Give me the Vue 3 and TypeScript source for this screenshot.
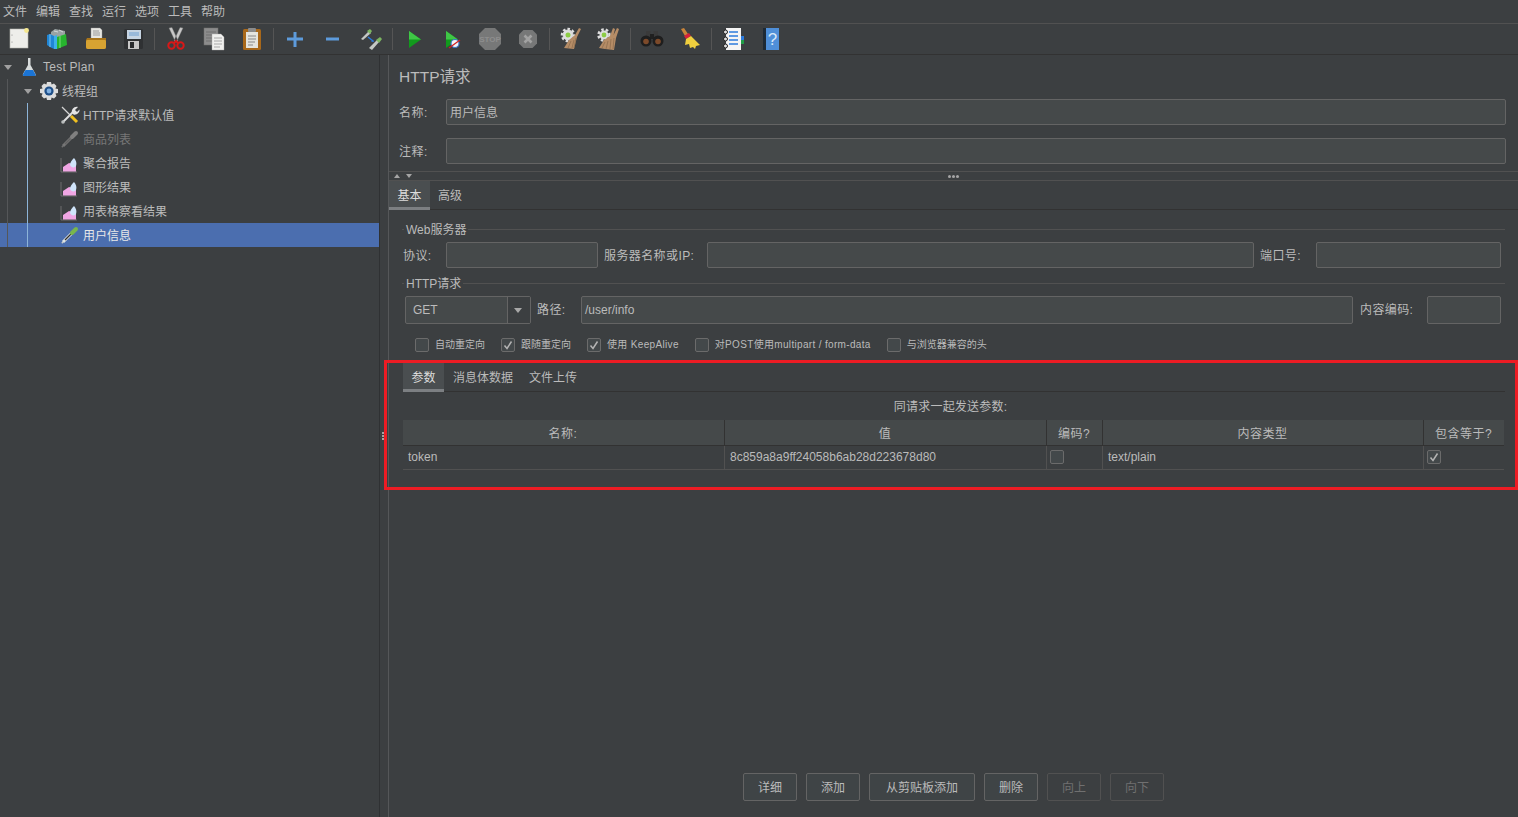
<script setup lang="ts">
const menus = ['文件', '编辑', '查找', '运行', '选项', '工具', '帮助']

// null marks a separator in the toolbar
const tools: (string | null)[] = [
  'new', 'templates', 'open', 'save', null,
  'cut', 'copy', 'paste', null,
  'expand', 'collapse', 'toggle', null,
  'start', 'startNoPause', 'stop', 'shutdown', null,
  'clear', 'clearAll', null,
  'search', 'reset', null,
  'functions', 'help',
]

const treeRows = [
  { label: 'Test Plan', icon: 'flask', indent: 20, arrow: 4 },
  { label: '线程组', icon: 'gear', indent: 39, arrow: 24 },
  { label: 'HTTP请求默认值', icon: 'tools', indent: 60 },
  { label: '商品列表', icon: 'pipette', indent: 60, disabled: true },
  { label: '聚合报告', icon: 'chart', indent: 60 },
  { label: '图形结果', icon: 'chart', indent: 60 },
  { label: '用表格察看结果', icon: 'chart', indent: 60 },
  { label: '用户信息', icon: 'pipette', indent: 60, selected: true },
]

const options = [
  { label: '自动重定向', checked: false },
  { label: '跟随重定向', checked: true },
  { label: '使用 KeepAlive', checked: true, latin: true },
  { label: '对POST使用multipart / form-data', checked: false, latin: true },
  { label: '与浏览器兼容的头', checked: false },
]

const columns = ['名称:', '值', '编码?', '内容类型', '包含等于?']

const buttons = [
  { label: '详细', width: 54 },
  { label: '添加', width: 54 },
  { label: '从剪贴板添加', width: 106 },
  { label: '删除', width: 54 },
  { label: '向上', width: 54, disabled: true },
  { label: '向下', width: 54, disabled: true },
]
</script>

<template>
  <div class="app">
    <div class="menubar">
      <span v-for="m in menus" :key="m" class="menu">{{ m }}</span>
    </div>

    <div class="toolbar">
      <template v-for="(tool, i) in tools" :key="i">
        <span v-if="tool === null" class="sep"></span>
        <span v-else class="tool">
          <svg width="24" height="24" viewBox="0 0 24 24">
            <g v-if="tool === 'new'">
              <rect x="3" y="2" width="18" height="19" fill="#eeeeea" stroke="#b5b5b0" stroke-width=".6" />
              <circle cx="19.500" cy="3.500" r="2.400" fill="#f6e88e" />
              <circle cx="5" cy="8" r=".6" fill="#888" /><circle cx="5" cy="15" r=".6" fill="#888" />
            </g>
            <g v-else-if="tool === 'templates'">
              <path d="M6 5l4-3 5 1 5 1v6H6z" fill="#9aa3a3" />
              <path d="M9 4l4 1M14 3l4 2" stroke="#d4d8d8" />
              <path d="M2 8l3-1 4 2v13l-4-2-3-2z" fill="#1f86d6" />
              <path d="M5 7v13" stroke="#7cc4f0" />
              <path d="M9 9l3-1v14H9z" fill="#3cb0e8" />
              <path d="M12 10l9-3 1 11-10 4z" fill="#27b52e" />
              <path d="M15 9v12" stroke="#7fdc7f" />
            </g>
            <g v-else-if="tool === 'open'">
              <path d="M8 1h9l2 2v9H8z" fill="#e6e6e2" stroke="#999" stroke-width=".4" />
              <path d="M10 4h6M10 6h7M10 8h7" stroke="#888" stroke-width=".8" />
              <path d="M4 11h19v9a2 2 0 0 1-2 2H5a2 2 0 0 1-2-2v-7z" fill="#a9751a" />
              <path d="M3 15c0-2 1-2 3-2h16c1 0 1 1 1 2v5a2 2 0 0 1-2 2H5a2 2 0 0 1-2-2z" fill="#d7a332" />
            </g>
            <g v-else-if="tool === 'save'">
              <rect x="3" y="2" width="19" height="20" rx="1.500" fill="#2f3133" />
              <rect x="6" y="3" width="14" height="9" fill="#c6d4e2" />
              <path d="M8 6h10M8 8h10" stroke="#6c9ed0" stroke-width="1" />
              <rect x="7" y="14" width="11" height="8" fill="#c8c8c8" />
              <rect x="9" y="15" width="4" height="6" fill="#2a2c2e" />
            </g>
            <g v-else-if="tool === 'cut'">
              <path d="M5 1l3-.5 6 13-2.500 1.500zM19 1l-3-.5-6 13 2.500 1.500z" fill="#c8c8c8" stroke="#777" stroke-width=".4" />
              <circle cx="7.500" cy="18.500" r="3.200" fill="none" stroke="#d81818" stroke-width="2" />
              <circle cx="16.500" cy="18.500" r="3.200" fill="none" stroke="#d81818" stroke-width="2" />
              <path d="M10 16l2-2 2 2" fill="none" stroke="#d81818" stroke-width="2" />
            </g>
            <g v-else-if="tool === 'copy'">
              <rect x="2" y="1" width="14" height="17" fill="#8c8c8c" stroke="#6f6f6f" stroke-width=".5" />
              <path d="M4 5h10M4 8h10M4 11h10M4 14h10" stroke="#707070" />
              <path d="M10 7h9l3 3v13H10z" fill="#f0f0ee" stroke="#aaa" stroke-width=".4" />
              <path d="M12 11h8M12 14h8M12 17h8M12 20h6" stroke="#a8a8a8" />
            </g>
            <g v-else-if="tool === 'paste'">
              <rect x="3" y="2" width="18" height="21" rx="1.500" fill="#a8681a" />
              <rect x="6" y="5" width="12" height="16" fill="#e4e4de" />
              <rect x="8" y="1" width="8" height="4" rx="1" fill="#8b8b8b" />
              <path d="M8 9h8M8 12h8M8 15h7M8 18h5" stroke="#888" />
            </g>
            <path v-else-if="tool === 'expand'" d="M10.500 5h3v5.500H20v3h-6.500V20h-3v-6.500H4v-3h6.500z" fill="#5d9bdc" />
            <rect v-else-if="tool === 'collapse'" x="5" y="10.500" width="13" height="3" fill="#5d9bdc" />
            <g v-else-if="tool === 'toggle'">
              <path d="M2 12l8-8 2 2-8 7z" fill="#c4c8c4" />
              <path d="M8 4l3-2 2 2-2 3z" fill="#7cb661" />
              <path d="M10 21l8-8 2 2-7 8z" fill="#c4c8c4" />
              <path d="M17 13l4-3 2 2-3 4z" fill="#7cb661" />
              <path d="M9 10l5 4" stroke="#2c7bdc" stroke-width="1.400" />
              <path d="M15 15l-3-.5 2-2z" fill="#2c7bdc" />
            </g>
            <g v-else-if="tool === 'start'">
              <path d="M7 4l12 8.500L7 21z" fill="#119a1c" />
              <path d="M7 4l12 8.500L7 12.500z" fill="#3fc746" />
            </g>
            <g v-else-if="tool === 'startNoPause'">
              <path d="M6 4l12 8.500L6 21z" fill="#119a1c" />
              <path d="M6 4l12 8.500L6 12.500z" fill="#3fc746" />
              <circle cx="15" cy="16.500" r="4" fill="#f2f4f8" stroke="#3c78c8" stroke-width="1.200" />
              <path d="M9 21l11-8" stroke="#d02020" stroke-width="1.300" />
            </g>
            <g v-else-if="tool === 'stop'">
              <path d="M7 1h10l6 6v10l-6 6H7l-6-6V7z" fill="#777878" />
              <text x="12" y="15" text-anchor="middle" class="stop-text">STOP</text>
            </g>
            <g v-else-if="tool === 'shutdown'">
              <path d="M7.500 3h9l4.500 4.500v9L16.500 21h-9L3 16.500v-9z" fill="#777878" />
              <path d="M8.500 8.500l7 7M15.500 8.500l-7 7" stroke="#a2a2a2" stroke-width="2.600" />
            </g>
            <g v-else-if="tool === 'clear'">
              <circle cx="9" cy="8" r="5" fill="#dedede" stroke="#dedede" />
              <circle cx="9" cy="8" r="6" fill="none" stroke="#dedede" stroke-width="2.500" stroke-dasharray="2.500 2" />
              <circle cx="9" cy="8" r="2.500" fill="#8ccc44" />
              <path d="M20 1l2 1-4 8-3 12-10-1 5-8 6-5z" fill="#b58c66" />
              <path d="M12 14l-3 7M15 13l-2 8M17 11l-2 10" stroke="#8a6a4a" stroke-width=".7" />
            </g>
            <g v-else-if="tool === 'clearAll'">
              <circle cx="7" cy="8" r="4.500" fill="#dedede" />
              <circle cx="7" cy="8" r="5.500" fill="none" stroke="#dedede" stroke-width="2.500" stroke-dasharray="2.500 2" />
              <circle cx="7" cy="8" r="2.400" fill="#8ccc44" />
              <path d="M16 1l2 1-1.500 6L20 1l2 1-3 9-2 12-9-1-6-1 5-8 6-4z" fill="#b58c66" />
              <path d="M8 15l-3 6M11 14l-2 8M14 12l-1 10M17 11l-1 11" stroke="#8a6a4a" stroke-width=".7" />
            </g>
            <g v-else-if="tool === 'search'">
              <rect x="6" y="4" width="4.500" height="6" fill="#3a3a3a" /><rect x="13.500" y="4" width="4.500" height="6" fill="#3a3a3a" />
              <rect x="10" y="7" width="4" height="5" fill="#202020" />
              <circle cx="6" cy="14" r="5.500" fill="#1e1e1e" /><circle cx="18" cy="14" r="5.500" fill="#1e1e1e" />
              <circle cx="6" cy="14.500" r="2.800" fill="#7c4a2a" /><circle cx="18" cy="14.500" r="2.800" fill="#7c4a2a" />
            </g>
            <g v-else-if="tool === 'reset'">
              <path d="M3 2l3-1 4 6-3 2z" fill="#c8843a" />
              <path d="M6 9l5-3 2 3-5 3z" fill="#d8203a" />
              <path d="M8 12l5-3 9 9-4 1-1 3-2-2-3 1-1-4-4 1z" fill="#f0cf3e" />
            </g>
            <g v-else-if="tool === 'functions'">
              <rect x="5" y="1" width="15" height="22" fill="#f4f4f4" />
              <path d="M8 5h9M8 9h9M8 13h9M8 17h9" stroke="#2c7bdc" stroke-width="1.400" />
              <rect x="20" y="9" width="3" height="4" fill="#2c7bdc" /><rect x="20" y="13" width="3" height="4" fill="#1f9c46" />
              <circle cx="4.500" cy="5" r="2" fill="#ddd" stroke="#222" /><circle cx="4.500" cy="12" r="2" fill="#ddd" stroke="#222" /><circle cx="4.500" cy="19" r="2" fill="#ddd" stroke="#222" />
            </g>
            <g v-else-if="tool === 'help'">
              <rect x="4" y="1" width="3" height="22" fill="#1e2a35" />
              <rect x="7" y="1" width="13" height="22" fill="#4f8fd8" />
              <text x="13.500" y="18" text-anchor="middle" class="help-text">?</text>
            </g>
          </svg>
        </span>
      </template>
    </div>

    <div class="main">
      <div class="tree">
        <div
          v-for="row in treeRows"
          :key="row.label"
          class="tree-row"
          :class="{ selected: row.selected, disabled: row.disabled }"
          :style="{ paddingLeft: row.indent + 'px' }"
        >
          <span v-if="row.arrow" class="tree-arrow" :style="{ left: row.arrow + 'px' }"></span>
          <svg class="tree-icon" width="20" height="20" viewBox="0 0 20 20">
            <g v-if="row.icon === 'flask'">
              <path d="M8 1h2.500v7l5 9c.5 1 0 2-1 2H4c-1 0-1.500-1-1-2l5-9z" fill="#d8dcdc" />
              <path d="M5.500 13h7.500l2.500 4.500c.3.800 0 1.500-1 1.500H4c-1 0-1.300-.7-1-1.500z" fill="#1b74d4" />
            </g>
            <g v-else-if="row.icon === 'gear'">
              <path d="M8 1h4l.6 2.600 2.400-1.100 2.500 2.500-1.100 2.400L19 8v4l-2.600.6 1.100 2.400-2.500 2.500-2.400-1.100L12 19H8l-.6-2.600-2.400 1.100-2.500-2.500 1.100-2.400L1 12V8l2.600-.6L2.500 5 5 2.500l2.400 1.100z" fill="#dcdcdc" />
              <circle cx="10" cy="10" r="4.600" fill="#1f4f88" />
              <circle cx="10" cy="10" r="2.400" fill="#7fb0e2" />
            </g>
            <g v-else-if="row.icon === 'tools'">
              <path d="M2 2l9 9" stroke="#d4d4d4" stroke-width="1.300" />
              <path d="M11 11l6 6" stroke="#f0c020" stroke-width="3" />
              <path d="M3 17l10-10" stroke="#e0e0e0" stroke-width="2" />
              <circle cx="3" cy="17" r="1.800" fill="#b8bcbc" />
              <path d="M12 8c-1-3 2-7 6-6l-3 3 2 2 2.500-2.500c.5 3-3 6-6 5z" fill="#e4e4e4" />
            </g>
            <g v-else-if="row.icon === 'pipette'">
              <path d="M2 17l1 1" :stroke="row.disabled ? '#6f6f6f' : '#c8ccc8'" stroke-width="2" />
              <path d="M3 17l8-8" :stroke="row.disabled ? '#767676' : '#e0e4e0'" stroke-width="3" />
              <path d="M5 15l6-6" :stroke="row.disabled ? '#606060' : '#2e2e2e'" stroke-width="1.300" />
              <path d="M12 8l4-4" :stroke="row.disabled ? '#808080' : '#79b64d'" stroke-width="4" stroke-linecap="round" />
            </g>
            <g v-else-if="row.icon === 'chart'">
              <path d="M1 5v14h16" fill="none" stroke="#787878" stroke-width=".8" />
              <path d="M3 18.500V14l6-4 7 2v6.500z" fill="#f0a6e4" />
              <path d="M14 5c2 2 3 5 2 8-1 2-5 2-6-1 0-3 2-5 4-7z" fill="#cfe4fa" />
            </g>
          </svg>
          <span class="tree-label" :class="{ latin: row.icon === 'flask' }">{{ row.label }}</span>
        </div>
        <span class="guide guide-root"></span>
        <span class="guide guide-group"></span>
      </div>

      <div class="splitter">
        <span class="grip"></span>
      </div>

      <div class="panel">
        <div class="title">HTTP请求</div>
        <div class="name-row">
          <label>名称:</label>
          <div class="field">用户信息</div>
        </div>
        <div class="name-row">
          <label>注释:</label>
          <div class="field"></div>
        </div>

        <div class="divider">
          <span class="tri up"></span>
          <span class="tri down"></span>
          <span class="dots"></span>
        </div>

        <div class="tabs">
          <span class="tab active">基本</span>
          <span class="tab">高级</span>
        </div>

        <div class="body">
          <div class="legend"><span>Web服务器</span></div>
          <div class="row">
            <label class="l-proto">协议:</label>
            <div class="field f-proto"></div>
            <label class="l-host">服务器名称或IP:</label>
            <div class="field f-grow"></div>
            <label class="l-port">端口号:</label>
            <div class="field f-port"></div>
          </div>

          <div class="legend second"><span>HTTP请求</span></div>
          <div class="row tall">
            <div class="select">
              <span class="select-value">GET</span>
              <span class="select-btn"></span>
            </div>
            <label class="l-path">路径:</label>
            <div class="field f-grow">/user/info</div>
            <label class="l-enc">内容编码:</label>
            <div class="field f-enc"></div>
          </div>

          <div class="checks">
            <div v-for="o in options" :key="o.label" class="check" :class="{ latin: o.latin }">
              <span class="box">
                <svg v-if="o.checked" width="12" height="12" viewBox="0 0 12 12">
                  <path d="M2.500 6.500l2.500 3 4.500-7" fill="none" stroke="#b4b4b4" stroke-width="1.500" />
                </svg>
              </span>
              <span>{{ o.label }}</span>
            </div>
          </div>

          <div class="tabs inner">
            <span class="tab active">参数</span>
            <span class="tab">消息体数据</span>
            <span class="tab">文件上传</span>
          </div>
          <div class="caption">同请求一起发送参数:</div>
          <div class="table">
            <div v-for="c in columns" :key="c" class="th">{{ c }}</div>
            <div class="td">token</div>
            <div class="td">8c859a8a9ff24058b6ab28d223678d80</div>
            <div class="td td-check"><span class="box"></span></div>
            <div class="td">text/plain</div>
            <div class="td td-check">
              <span class="box">
                <svg width="12" height="12" viewBox="0 0 12 12">
                  <path d="M2.500 6.500l2.500 3 4.500-7" fill="none" stroke="#b4b4b4" stroke-width="1.500" />
                </svg>
              </span>
            </div>
          </div>
        </div>

        <div class="actions">
          <button
            v-for="b in buttons"
            :key="b.label"
            class="btn"
            :class="{ off: b.disabled }"
            :style="{ width: b.width + 'px' }"
          >{{ b.label }}</button>
        </div>
      </div>
    </div>

    <div class="highlight"></div>
  </div>
</template>

<style>
html, body {
  margin: 0;
  background: #3c3f41;
  overflow: hidden;
}
</style>

<style scoped>
.app {
  position: relative;
  display: flex;
  flex-direction: column;
  width: 1518px;
  height: 817px;
  background: #3c3f41;
  color: #bbbbbb;
  font-family: "Liberation Sans", "Noto Sans CJK SC", sans-serif;
  font-size: 12px;
  line-height: 14px;
}

.menubar {
  display: flex;
  align-items: center;
  gap: 9px;
  height: 23px;
  padding-left: 3px;
  border-bottom: 1px solid #515151;
}

.toolbar {
  display: flex;
  align-items: center;
  height: 30px;
  border-bottom: 1px solid #323232;
}

.tool {
  display: flex;
  align-items: center;
  justify-content: center;
  width: 38px;
  height: 30px;
}

.sep {
  width: 1px;
  height: 22px;
  margin: 0 2px;
  background: #555555;
}

.stop-text {
  font-size: 8px;
  font-weight: bold;
  fill: #8e8e8e;
}

.help-text {
  font-size: 17px;
  fill: #d8e8f8;
}

.main {
  flex: 1;
  display: flex;
  min-height: 0;
}

.tree {
  position: relative;
  width: 379px;
  border-right: 1px solid #2f3133;
}

.tree-row {
  position: relative;
  display: flex;
  align-items: center;
  gap: 3px;
  height: 24px;
}

.tree-row.selected {
  background: #4b6eaf;
  color: #e8e8e8;
}

.tree-row.disabled {
  color: #777777;
}

.tree-label {
  padding-top: 2px;
}

.tree-label.latin {
  padding-top: 0;
  letter-spacing: .25px;
}

.tree-arrow {
  position: absolute;
  top: 10px;
  border-left: 4.500px solid transparent;
  border-right: 4.500px solid transparent;
  border-top: 5px solid #a0a0a0;
}

.guide {
  position: absolute;
  width: 1px;
  left: 7px;
  top: 24px;
  height: 168px;
  background: #555759;
}

.guide-group {
  left: 27px;
  top: 48px;
  height: 144px;
  background: #8db4d8;
}

.splitter {
  position: relative;
  width: 8px;
  border-right: 1px solid #555759;
}

.grip {
  position: absolute;
  left: 2px;
  top: 377px;
  width: 2px;
  height: 2px;
  background: #a5a5a5;
  box-shadow: 0 3px #a5a5a5, 0 6px #a5a5a5;
}

.panel {
  flex: 1;
  display: flex;
  flex-direction: column;
  min-width: 0;
}

.title {
  height: 44px;
  padding-left: 10px;
  line-height: 43px;
  font-size: 15.500px;
}

.name-row {
  display: flex;
  align-items: center;
  height: 26px;
  margin-bottom: 13px;
  padding: 0 12px 0 10px;
}

.name-row label {
  width: 47px;
  padding-top: 2px;
  letter-spacing: .5px;
}

.field {
  box-sizing: border-box;
  flex: 1;
  height: 100%;
  display: flex;
  align-items: center;
  padding-left: 3px;
  background: #45494a;
  border: 1px solid #646464;
  border-radius: 2px;
  white-space: nowrap;
}

.name-row .field {
  padding-top: 2px;
}

.divider {
  position: relative;
  box-sizing: border-box;
  height: 10px;
  margin-top: -6px;
  border-top: 1px solid #515151;
  border-bottom: 1px solid #515151;
}

.tri {
  position: absolute;
  top: 2px;
  border-left: 3.500px solid transparent;
  border-right: 3.500px solid transparent;
}

.tri.up {
  left: 5px;
  border-bottom: 4px solid #a5a5a5;
}

.tri.down {
  left: 17px;
  border-top: 4px solid #a5a5a5;
}

.dots {
  position: absolute;
  left: 559px;
  top: 3px;
  width: 3px;
  height: 3px;
  border-radius: 50%;
  background: #a5a5a5;
  box-shadow: 4px 0 #a5a5a5, 8px 0 #a5a5a5;
}

.tabs {
  display: flex;
  height: 28px;
  border-bottom: 1px solid #323232;
}

.tab {
  display: flex;
  align-items: center;
  box-sizing: border-box;
  padding: 0 8px;
  height: 29px;
}

.tab.active {
  padding: 3px 8.500px 0;
  background: #4a4e50;
  border-bottom: 3px solid #7c7f82;
  color: #dddddd;
}

.body {
  padding: 12px 13px 0;
}

.legend {
  display: flex;
  align-items: center;
  gap: 2px;
  height: 14px;
  margin-bottom: 6px;
}

.legend span {
  padding-top: 2px;
}

.legend::before {
  content: "";
  width: 2px;
  height: 1px;
  background: #515151;
}

.legend::after {
  content: "";
  flex: 1;
  height: 1px;
  background: #515151;
}

.legend.second {
  margin-top: 8px;
}

.row {
  display: flex;
  align-items: center;
  height: 26px;
  padding: 0 4px 0 1px;
}

.row label {
  padding-top: 2px;
  letter-spacing: .4px;
  white-space: nowrap;
}

.row.tall {
  height: 28px;
  padding-left: 3px;
}

.row.tall label {
  padding-top: 0;
}

.l-proto { width: 43px; }
.f-proto { flex: none; width: 152px; }
.l-host { width: 103px; margin-left: 6px; }
.f-grow { flex: 1; }
.l-port { width: 56px; margin-left: 6px; }
.f-port { flex: none; width: 185px; }
.l-path { width: 44px; margin-left: 6px; }
.l-enc { width: 67px; margin-left: 7px; }
.f-enc { flex: none; width: 74px; }

.select {
  box-sizing: border-box;
  display: flex;
  width: 126px;
  height: 100%;
  background: #45494a;
  border: 1px solid #646464;
  border-radius: 2px;
}

.select-value {
  flex: 1;
  display: flex;
  align-items: center;
  padding-left: 7px;
}

.select-btn {
  position: relative;
  width: 22px;
  background: #3c3f41;
  border-left: 1px solid #646464;
}

.select-btn::after {
  content: "";
  position: absolute;
  left: 6px;
  top: 11px;
  border-left: 4.500px solid transparent;
  border-right: 4.500px solid transparent;
  border-top: 5px solid #a8a8a8;
}

.checks {
  display: flex;
  align-items: center;
  gap: 16px;
  height: 14px;
  margin-top: 14px;
  padding-left: 13px;
  font-size: 10px;
}

.check {
  display: flex;
  align-items: center;
  gap: 6px;
}

.check.latin {
  letter-spacing: .33px;
}

.box {
  box-sizing: border-box;
  display: flex;
  align-items: center;
  justify-content: center;
  width: 14px;
  height: 14px;
  background: #43484a;
  border: 1px solid #6b6b6b;
  border-radius: 2px;
}

.tabs.inner {
  margin-top: 11px;
  margin-left: 1px;
}

.tabs.inner .tab.active {
  margin-right: 1px;
}

.caption {
  height: 28px;
  padding-right: 6px;
  line-height: 30px;
  letter-spacing: .2px;
  text-align: center;
}

.table {
  display: grid;
  grid-template-columns: 322px 322px 56px 321px 80px;
  margin-left: 1px;
}

.th {
  box-sizing: border-box;
  height: 26px;
  padding-right: 1px;
  line-height: 29px;
  letter-spacing: .5px;
  text-align: center;
  background: #45494a;
  border-right: 1px solid #323232;
  border-bottom: 1px solid #323232;
}

.td {
  box-sizing: border-box;
  display: flex;
  align-items: center;
  height: 24px;
  padding: 0 0 2px 5px;
  border-right: 1px solid #515151;
  border-bottom: 1px solid #515151;
}

.th:nth-child(5),
.td:last-child {
  border-right: 0;
}

.td-check {
  padding-left: 3px;
}

.actions {
  display: flex;
  justify-content: center;
  gap: 9px;
  margin-top: auto;
  padding-bottom: 16px;
}

.btn {
  height: 28px;
  padding: 2px 0 0;
  background: #3f4446;
  color: #bbbbbb;
  font: inherit;
  border: 1px solid #646464;
  border-radius: 2px;
}

.btn.off {
  background: #3c3f41;
  color: #707070;
  border-color: #515151;
}

.highlight {
  position: absolute;
  left: 384px;
  top: 360px;
  width: 1134px;
  height: 130px;
  box-sizing: border-box;
  border: 3px solid #ed1c24;
}

.menu {
  white-space: nowrap;
}
</style>
